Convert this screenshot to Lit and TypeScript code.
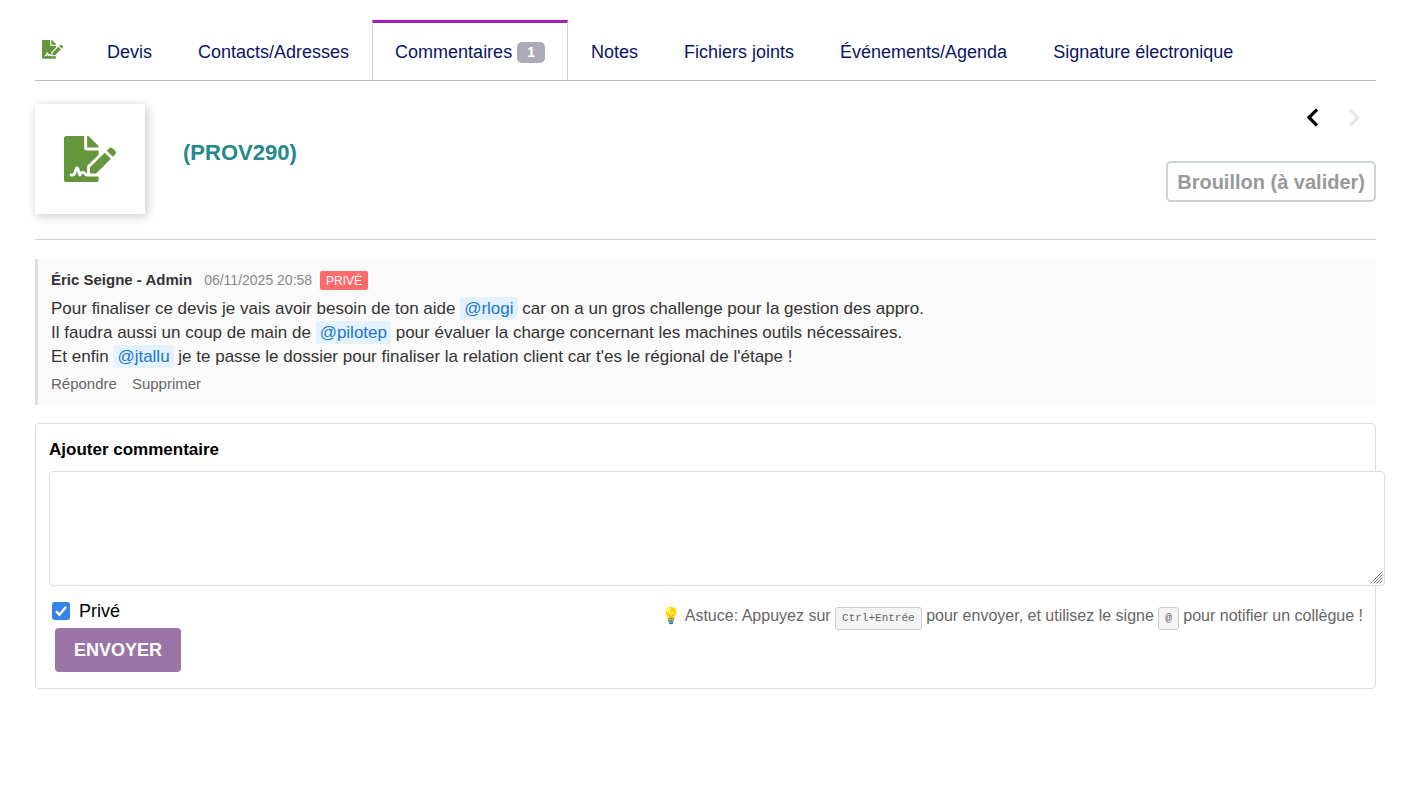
import { LitElement, html, css, svg } from "lit";
import { customElement } from "lit/decorators.js";

const signaturePath =
  "M218.17 424.14c-2.95-5.92-8.09-6.52-10.17-6.52s-7.22.59-10.02 6.19l-7.67 15.34c-6.37 12.78-25.03 11.37-29.48-2.09L144 386.59l-10.61 31.88c-5.89 17.66-22.38 29.53-41 29.53H80c-8.84 0-16-7.16-16-16s7.16-16 16-16h12.39c4.83 0 9.11-3.08 10.64-7.66l18.19-54.64c3.3-9.81 12.44-16.41 22.78-16.41s19.48 6.59 22.77 16.41l13.88 41.64c19.75-16.19 54.06-9.7 66 14.16 1.89 3.78 5.49 5.95 9.36 6.26v-82.12l128-127.09V160H248c-13.2 0-24-10.8-24-24V0H24C10.7 0 0 10.7 0 24v464c0 13.3 10.7 24 24 24h336c13.3 0 24-10.7 24-24v-40l-128-.11c-16.12-.31-30.58-9.28-37.83-23.75zM384 121.9c0-6.3-2.5-12.4-7-16.9L279.1 7c-4.5-4.5-10.6-7-17-7H256v128h128v-6.1zm-96 225.06V416h68.99l161.68-162.78-67.88-67.88L288 346.96zm280.54-179.63l-31.87-31.87c-9.94-9.94-26.07-9.94-36.01 0l-27.25 27.25 67.88 67.88 27.25-27.25c9.95-9.94 9.95-26.07 0-36.01z";
const chevronPath =
  "M34.52 239.03L228.87 44.69c9.37-9.37 24.57-9.37 33.94 0l22.67 22.67c9.36 9.36 9.37 24.52.04 33.9L131.49 256l154.02 154.75c9.34 9.38 9.32 24.54-.04 33.9l-22.67 22.67c-9.37 9.37-24.57 9.37-33.94 0L34.52 272.97c-9.37-9.37-9.37-24.57 0-33.94z";

@customElement("signature-icon")
class SignatureIcon extends LitElement {
  static styles = css`
    :host { display: block; }
    svg { display: block; width: 100%; height: auto; fill: #65953d; }
  `;
  render() {
    return html`<svg viewBox="0 0 576 512" aria-hidden="true"><path d=${signaturePath} /></svg>`;
  }
}

@customElement("record-tabs")
class RecordTabs extends LitElement {
  static styles = css`
    nav { display: flex; height: 60px; border-bottom: 1px solid #bbb; }
    a {
      box-sizing: border-box;
      display: flex;
      align-items: center;
      gap: 5px;
      padding: 2px 23px 0;
      border: 0 solid transparent;
      border-width: 3px 0 0;
      color: #0a1464;
      font-size: 18px;
      text-decoration: none;
      white-space: nowrap;
    }
    .home { padding: 0 21px 4px 7px; }
    .home signature-icon { width: 21px; }
    .active { padding: 2px 22px 0; border-width: 3px 1px 0; border-color: #a51cbc #ccc transparent; }
    .count {
      padding: 0 10px;
      border-radius: 5px;
      background: #aaaabb;
      color: #fff;
      font-size: 14px;
      font-weight: bold;
      line-height: 21px;
    }
  `;
  render() {
    return html`<nav>
      <a class="home" href="#" aria-label="Fiche"><signature-icon></signature-icon></a>
      <a href="#">Devis</a>
      <a href="#">Contacts/Adresses</a>
      <a class="active" href="#" aria-current="page">Commentaires <span class="count">1</span></a>
      <a href="#">Notes</a>
      <a href="#">Fichiers joints</a>
      <a href="#">Événements/Agenda</a>
      <a href="#">Signature électronique</a>
    </nav>`;
  }
}

@customElement("record-banner")
class RecordBanner extends LitElement {
  static styles = css`
    header {
      display: flex;
      padding: 23px 0 25px;
      border-bottom: 1px solid #d3d3d3;
    }
    .thumb {
      display: grid;
      place-items: center;
      width: 110px;
      height: 110px;
      background: #fff;
      box-shadow: 2px 2px 10px rgba(0, 0, 0, 0.22);
    }
    .thumb signature-icon { width: 52px; }
    h1 { margin: 36px 0 0 38px; color: #25888a; font-size: 22px; line-height: 25px; }
    .side { display: flex; flex-direction: column; align-items: flex-end; margin-left: auto; }
    .pager { display: flex; gap: 29px; padding: 3px 15px 0 0; }
    .pager a { color: #000; }
    .pager .off { color: #e8e8e8; }
    svg { display: block; width: 13px; height: 21px; fill: currentColor; }
    .next { transform: scaleX(-1); }
    .status {
      margin-top: 33px;
      padding: 8px 9px 6px;
      border: 2px solid #cbd3d3;
      border-radius: 5px;
      color: #999;
      font-size: 20px;
      font-weight: bold;
      line-height: 23px;
    }
  `;
  render() {
    const chevron = svg`<path d=${chevronPath} />`;
    return html`<header>
      <div class="thumb"><signature-icon></signature-icon></div>
      <h1>(PROV290)</h1>
      <div class="side">
        <div class="pager">
          <a href="#" aria-label="Précédent"><svg viewBox="0 0 320 512">${chevron}</svg></a>
          <span class="off"><svg class="next" viewBox="0 0 320 512">${chevron}</svg></span>
        </div>
        <span class="status">Brouillon (à valider)</span>
      </div>
    </header>`;
  }
}

@customElement("comment-card")
class CommentCard extends LitElement {
  static styles = css`
    article {
      margin-top: 19px;
      padding: 12px 13px;
      border-left: 3px solid #ddd;
      background: #fafafa;
      color: #333;
    }
    .meta { display: flex; align-items: flex-start; line-height: 18px; font-size: 15px; }
    time { margin: 0 8px 0 12px; color: #888; font-size: 14px; }
    .private {
      padding: 1px 6px 0;
      border-radius: 2px;
      background: #ff6b6b;
      color: #fff;
      font-size: 12px;
    }
    p { margin: 7px 0 5px; font-size: 17px; line-height: 24px; }
    .mention {
      padding: 2px 4px;
      border-radius: 3px;
      background: #e3f2fd;
      color: #1976d2;
    }
    .actions { display: flex; gap: 15px; font-size: 15px; line-height: 19px; }
    .actions a { color: #666; text-decoration: none; }
  `;
  render() {
    return html`<article>
      <div class="meta">
        <strong>Éric Seigne - Admin</strong>
        <time datetime="2025-11-06T20:58">06/11/2025 20:58</time>
        <span class="private">PRIVÉ</span>
      </div>
      <p>
        Pour finaliser ce devis je vais avoir besoin de ton aide <span class="mention">@rlogi</span> car on a un gros challenge pour la gestion des appro.<br />
        Il faudra aussi un coup de main de <span class="mention">@pilotep</span> pour évaluer la charge concernant les machines outils nécessaires.<br />
        Et enfin <span class="mention">@jtallu</span> je te passe le dossier pour finaliser la relation client car t'es le régional de l'étape !
      </p>
      <div class="actions"><a href="#">Répondre</a><a href="#">Supprimer</a></div>
    </article>`;
  }
}

@customElement("comment-form")
class CommentForm extends LitElement {
  static styles = css`
    form {
      margin-top: 18px;
      padding: 16px 12px 16px 13px;
      border: 1px solid #ddd;
      border-radius: 4px;
    }
    .title { display: block; margin-bottom: 11px; font-size: 17px; font-weight: bold; line-height: 20px; }
    .field { position: relative; }
    textarea {
      display: block;
      box-sizing: content-box;
      width: 100%;
      height: 93px;
      margin: 0;
      padding: 10px;
      border: 1px solid #ddd;
      border-radius: 4px;
      background: #fff;
      font: 17px "Liberation Sans", Arial, sans-serif;
      resize: vertical;
    }
    textarea::-webkit-resizer { background: transparent; }
    .grip {
      position: absolute;
      right: -20px;
      bottom: 2px;
      width: 13px;
      height: 13px;
      fill: none;
      stroke: #777;
      pointer-events: none;
    }
    .foot { display: flex; justify-content: space-between; align-items: flex-start; }
    .check { display: flex; align-items: center; gap: 9px; margin: 15px 0 6px 3px; font-size: 18px; line-height: 21px; }
    input {
      appearance: none;
      width: 18px;
      height: 18px;
      margin: 0;
      border-radius: 3px;
      background: #3584e4;
    }
    .box { display: grid; margin-bottom: 2px; }
    .box > * { grid-area: 1 / 1; }
    .box svg { width: 18px; height: 18px; pointer-events: none; fill: none; stroke: #fff; stroke-width: 2.4; }
    input:not(:checked) { background: #fff; border: 1px solid #888; }
    button {
      margin-left: 6px;
      padding: 0 19px;
      border: 0;
      border-radius: 4px;
      background: #9b75a7;
      color: #fff;
      font: bold 18px/44px "Liberation Sans", Arial, sans-serif;
      text-transform: uppercase;
    }
    .hint { margin: 19px 0 0; color: #666; font-size: 16px; line-height: 22px; }
    kbd {
      display: inline-block;
      padding: 0 6px;
      border: 1px solid #ccc;
      border-radius: 3px;
      background: #f4f4f4;
      font: 11px/21px "Liberation Mono", monospace;
    }
  `;
  render() {
    return html`<form>
      <label class="title" for="body">Ajouter commentaire</label>
      <div class="field">
        <textarea id="body"></textarea>
        <svg class="grip" viewBox="0 0 13 13" aria-hidden="true"><path d="M0.5 12.5l12-12M3.5 12.5l9-9M6.5 12.5l6-6M9.5 12.5l3-3" /></svg>
      </div>
      <div class="foot">
        <div>
          <label class="check" for="private">
            <span class="box">
              <input id="private" type="checkbox" checked />
              <svg viewBox="0 0 18 18" aria-hidden="true"><path d="M4 9.2l3.4 3.6L14 5" /></svg>
            </span>
            Privé
          </label>
          <button type="button">Envoyer</button>
        </div>
        <p class="hint">💡 Astuce: Appuyez sur <kbd>Ctrl+Entrée</kbd> pour envoyer, et utilisez le signe <kbd>@</kbd> pour notifier un collègue !</p>
      </div>
    </form>`;
  }
}

@customElement("app-root")
class AppRoot extends LitElement {
  static styles = css`
    :host {
      display: block;
      padding: 20px 43px 20px 35px;
      background: #fff;
      color: #000;
      font-family: "Liberation Sans", Arial, sans-serif;
    }
    record-tabs, record-banner, comment-card, comment-form { display: block; }
  `;
  render() {
    return html`
      <record-tabs></record-tabs>
      <main>
        <record-banner></record-banner>
        <comment-card></comment-card>
        <comment-form></comment-form>
      </main>
    `;
  }
}
